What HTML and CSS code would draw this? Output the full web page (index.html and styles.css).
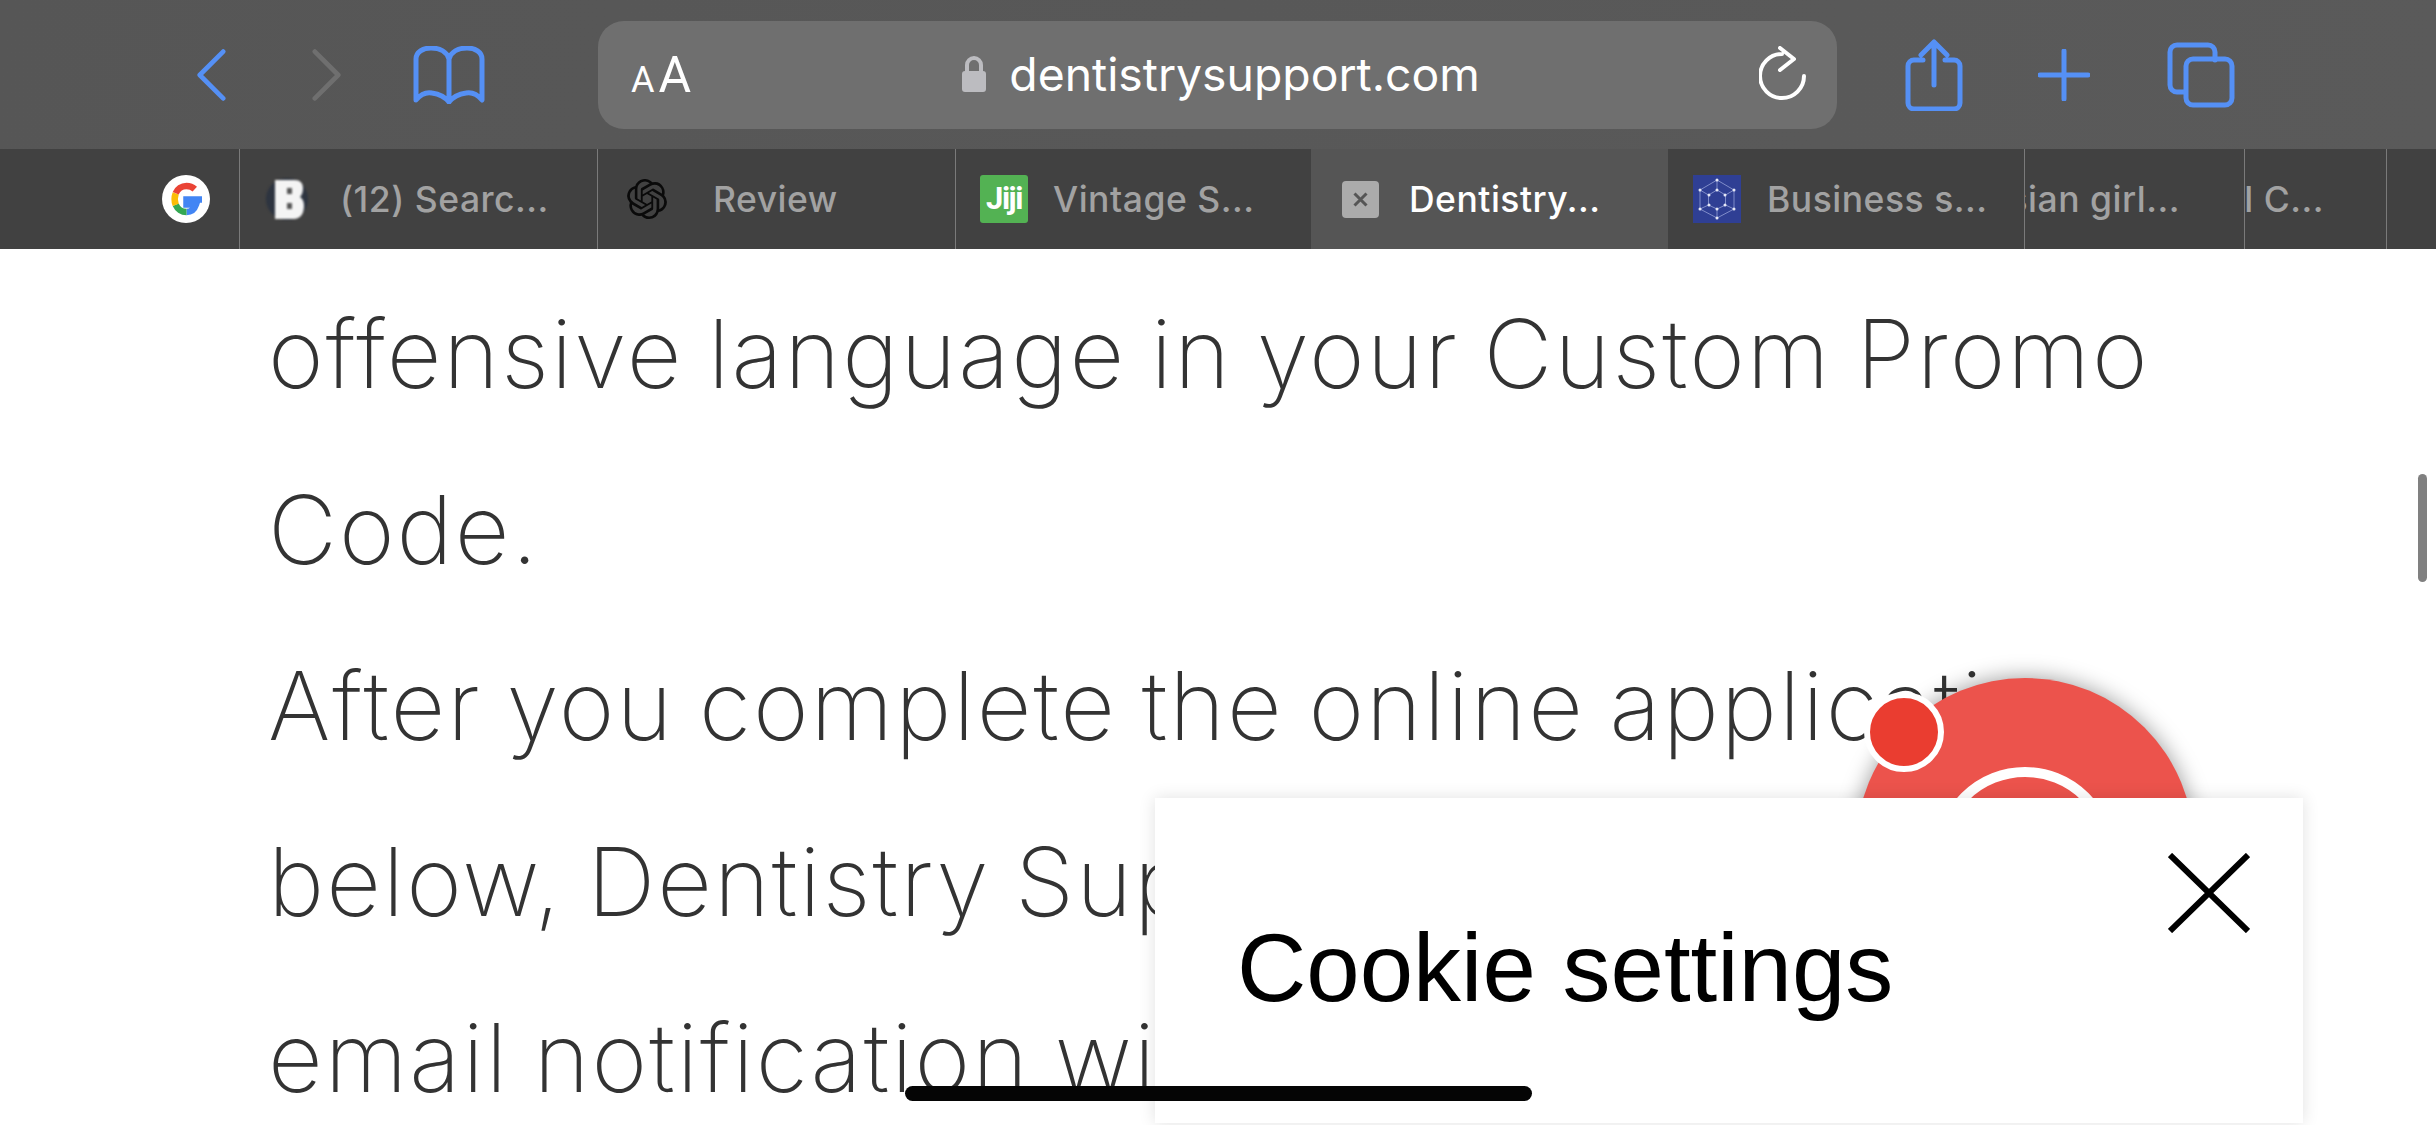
FILE: index.html
```html
<!DOCTYPE html>
<html lang="en">
<head>
    <meta charset="UTF-8">
    <meta name="viewport" content="width=device-width, initial-scale=1.0">
    <title>dentistrysupport.com</title>
    <link rel="stylesheet" href="styles.css">
</head>
<body>
    <header class="toolbar">
        <svg class="icon back" viewBox="0 0 32 56"><path d="M29 3 4 28l25 25" /></svg>
        <svg class="icon forward" viewBox="0 0 32 56"><path d="M3 3l25 25L3 53" /></svg>
        <svg class="icon book" viewBox="0 0 72 58">
            <path d="M36 13C34 6 27 2 18 2 10 2 3 6 3 13v41c5-6 11-8 16-7 7 1 13 4 17 9 4-5 10-8 17-9 5-1 11 1 16 7V13c0-7-7-11-15-11-9 0-16 4-18 11zM36 13v43" />
        </svg>

        <div class="address">
            <div class="text-size"><span class="small-a">A</span><span class="big-a">A</span></div>
            <div class="site">
                <svg class="lock" viewBox="0 0 26 36">
                    <path class="lock-body" d="M4 15h18a3 3 0 0 1 3 3v15a3 3 0 0 1-3 3H4a3 3 0 0 1-3-3V18a3 3 0 0 1 3-3z" />
                    <path class="lock-bow" d="M6 15V9a7 7 0 0 1 14 0v6" />
                </svg>
                <span class="url">dentistrysupport.com</span>
            </div>
            <svg class="reload" viewBox="0 0 48 54">
                <path d="M45 30a22 22 0 1 1-22-22M21 2l14 11-14 11" />
            </svg>
        </div>

        <svg class="icon share" viewBox="0 0 58 72">
            <path d="M18 21H9a6 6 0 0 0-6 6v37a6 6 0 0 0 6 6h40a6 6 0 0 0 6-6V27a6 6 0 0 0-6-6h-9M29 46V3M16 16 29 3l13 13" />
        </svg>
        <svg class="icon plus" viewBox="0 0 52 52"><path d="M26 2v48M2 26h48" /></svg>
        <svg class="icon pages" viewBox="0 0 68 66">
            <path d="M17 50H10a7 7 0 0 1-7-7V10a7 7 0 0 1 7-7h31a7 7 0 0 1 7 7v8" />
            <rect x="19" y="17" width="46" height="46" rx="7" />
        </svg>
    </header>

    <nav class="tabs">
        <div class="tab tab-first">
            <svg class="favicon google" viewBox="0 0 48 48">
                <circle cx="24" cy="24" r="24" fill="#fff" />
                <path d="M40 24.500H24.500v5H34c-1.500 4.500-5 7.500-9.500 7.500" fill="none" stroke="#4285f4" stroke-width="6.500" />
                <path d="M24.500 37c-4.800 0-9-2.900-10.800-7.200" fill="none" stroke="#34a853" stroke-width="6.500" />
                <path d="M13.700 29.800c-1.400-3.700-1.400-7.800 0-11.500" fill="none" stroke="#fbbc05" stroke-width="6.500" />
                <path d="M13.700 18.300c1.800-4.300 6-7.300 10.800-7.300 3.300 0 6 1.100 8.300 3.200" fill="none" stroke="#ea4335" stroke-width="6.500" />
            </svg>
        </div>
        <div class="tab">
            <svg class="favicon blurred" viewBox="0 0 44 48">
                <circle cx="21" cy="24" r="21" fill="#2d3440" />
                <path d="M9 5h20c5 0 8 3 8 8 0 4-1 7-3 9 3 2 4 5 4 9 0 8-4 13-10 13H9z" fill="#f4f4f4" />
                <rect x="21" y="13" width="5" height="6" fill="#555" />
                <rect x="21" y="28" width="5" height="6" fill="#555" />
            </svg>
            <span class="tab-title">(12) Searc...</span>
        </div>
        <div class="tab">
            <svg class="favicon knot" viewBox="0 0 24 24">
                <path d="M22.2819 9.8211a5.9847 5.9847 0 0 0-.5157-4.9108 6.0462 6.0462 0 0 0-6.5098-2.9A6.0651 6.0651 0 0 0 4.9807 4.1818a5.9847 5.9847 0 0 0-3.9977 2.9 6.0462 6.0462 0 0 0 .7427 7.0966 5.98 5.98 0 0 0 .511 4.9107 6.051 6.051 0 0 0 6.5146 2.9001A5.9847 5.9847 0 0 0 13.2599 24a6.0557 6.0557 0 0 0 5.7718-4.2058 5.9894 5.9894 0 0 0 3.9977-2.9001 6.0557 6.0557 0 0 0-.7475-7.0729zm-9.022 12.6081a4.4755 4.4755 0 0 1-2.8764-1.0408l.1419-.0804 4.7783-2.7582a.7948.7948 0 0 0 .3927-.6813v-6.7369l2.02 1.1686a.071.071 0 0 1 .038.052v5.5826a4.504 4.504 0 0 1-4.4945 4.4944zm-9.6607-4.1254a4.4708 4.4708 0 0 1-.5346-3.0137l.142.0852 4.783 2.7582a.7712.7712 0 0 0 .7806 0l5.8428-3.3685v2.3324a.0804.0804 0 0 1-.0332.0615L9.74 19.9502a4.4992 4.4992 0 0 1-6.1408-1.6464zM2.3408 7.8956a4.485 4.485 0 0 1 2.3655-1.9728V11.6a.7664.7664 0 0 0 .3879.6765l5.8144 3.3543-2.0201 1.1685a.0757.0757 0 0 1-.071 0l-4.8303-2.7865A4.504 4.504 0 0 1 2.3408 7.872zm16.5963 3.8558L13.1038 8.364 15.1192 7.2a.0757.0757 0 0 1 .071 0l4.8303 2.7913a4.4944 4.4944 0 0 1-.6765 8.1042v-5.6772a.79.79 0 0 0-.407-.667zm2.0107-3.0231l-.142-.0852-4.7735-2.7818a.7759.7759 0 0 0-.7854 0L9.409 9.2297V6.8974a.0662.0662 0 0 1 .0284-.0615l4.8303-2.7866a4.4992 4.4992 0 0 1 6.6802 4.66zM8.3065 12.863l-2.02-1.1638a.0804.0804 0 0 1-.038-.0567V6.0742a4.4992 4.4992 0 0 1 7.3757-3.4537l-.142.0805L8.704 5.459a.7948.7948 0 0 0-.3927.6813zm1.0976-2.3654l2.602-1.4998 2.6069 1.4998v2.9994l-2.5974 1.4997-2.6067-1.4997Z" />
            </svg>
            <span class="tab-title tab-title-wide">Review</span>
        </div>
        <div class="tab tab-jiji">
            <div class="favicon jiji">Jiji</div>
            <span class="tab-title">Vintage S...</span>
        </div>
        <div class="tab tab-active">
            <div class="favicon closer">
                <svg viewBox="0 0 20 20"><path d="M2 2l16 16M18 2 2 18" /></svg>
            </div>
            <span class="tab-title">Dentistry...</span>
        </div>
        <div class="tab tab-after-active">
            <svg class="favicon" viewBox="0 0 48 48">
                <rect width="48" height="48" fill="#2f3f94" />
                <g fill="none" stroke="#7f8cc9" stroke-width="1">
                    <path d="M24 5 41 15v19L24 43 7 34V15zM24 15l8.500 5v10L24 34l-8.500-4V20zM24 5v10M41 15l-8.500 5M41 34l-8.500-4M24 43v-9M7 34l8.500-4M7 15l8.500 5" />
                </g>
                <g fill="#e6e8f5">
                    <circle cx="24" cy="5" r="1.500" /><circle cx="41" cy="15" r="1.500" /><circle cx="41" cy="34" r="1.500" />
                    <circle cx="24" cy="43" r="1.500" /><circle cx="7" cy="34" r="1.500" /><circle cx="7" cy="15" r="1.500" />
                    <circle cx="24" cy="15" r="1.500" /><circle cx="32" cy="20" r="1.500" /><circle cx="32" cy="30" r="1.500" />
                    <circle cx="24" cy="34" r="1.500" /><circle cx="16" cy="30" r="1.500" /><circle cx="16" cy="20" r="1.500" />
                </g>
            </svg>
            <span class="tab-title">Business s...</span>
        </div>
        <div class="tab tab-stack tab-stack-a"><span class="tab-title">Asian girl...</span></div>
        <div class="tab tab-stack tab-stack-b"><span class="tab-title">al C...</span></div>
    </nav>

    <main class="page">
        <p>offensive language in your Custom Promo<br>Code.</p>
        <p>After you complete the online application<br>below, Dentistry Support will send you an<br>email notification with your code</p>

        <div class="scroll-thumb"></div>

        <div class="fab">
            <div class="fab-ring"></div>
        </div>
        <div class="fab-dot"></div>

        <section class="cookie-panel">
            <svg class="cookie-close" viewBox="0 0 82 80"><path d="M2 2l78 76M80 2 2 78" /></svg>
            <h2>Cookie settings</h2>
        </section>

        <div class="home-bar"></div>
    </main>
</body>
</html>
```

FILE: styles.css
```css
* {
    box-sizing: border-box;
}

html, body {
    height: 100%;
}

body {
    margin: 0;
    overflow: hidden;
    background-color: #fff;
    font-family: Inter, "Liberation Sans", sans-serif;
    display: flex;
    flex-direction: column;
}

/* toolbar */
.toolbar {
    height: 149px;
    flex: none;
    display: flex;
    align-items: center;
    padding-left: 196px;
    background: linear-gradient(100deg, #565656, #5a5a5a);
}

.icon {
    flex: none;
    fill: none;
    stroke: #5590f5;
    stroke-width: 5;
    stroke-linecap: round;
    stroke-linejoin: round;
}

.back {
    width: 30px;
    height: 56px;
}

.forward {
    width: 30px;
    height: 56px;
    margin-left: 86px;
    stroke: #6f6f6f;
}

.book {
    width: 72px;
    height: 58px;
    margin-left: 71px;
}

.address {
    width: 1239px;
    height: 108px;
    margin-left: 113px;
    padding: 0 30px 0 33px;
    border-radius: 26px;
    background-color: #6f6f6f;
    display: flex;
    align-items: center;
    color: #fff;
}

.text-size {
    font-family: Roboto, sans-serif;
    font-weight: 400;
    display: flex;
    align-items: baseline;
    gap: 4px;
    line-height: 1;
}

.small-a {
    font-size: 36px;
}

.big-a {
    font-size: 50px;
}

.site {
    flex: 1;
    display: flex;
    align-items: center;
    justify-content: center;
    gap: 22px;
    margin-left: -9px;
}

.lock {
    width: 26px;
    height: 36px;
}

.lock-body {
    fill: #bcbcc0;
}

.lock-bow {
    fill: none;
    stroke: #bcbcc0;
    stroke-width: 4;
}

.url {
    font-size: 46.300px;
    line-height: 1;
}

.reload {
    flex: none;
    width: 48px;
    height: 54px;
    margin-bottom: 4px;
    fill: none;
    stroke: #fff;
    stroke-width: 4;
    stroke-linecap: round;
    stroke-linejoin: round;
}

.share {
    width: 58px;
    height: 72px;
    margin-left: 68px;
}

.plus {
    width: 52px;
    height: 52px;
    margin-left: 75px;
}

.pages {
    width: 68px;
    height: 66px;
    margin-left: 77px;
}

/* tab strip */
.tabs {
    height: 100px;
    flex: none;
    display: flex;
    background-color: #414141;
    color: #a2a2a2;
    font-weight: 500;
    font-size: 35.500px;
    letter-spacing: 0.500px;
}

.tab {
    flex: none;
    width: 358px;
    display: flex;
    align-items: center;
    padding-left: 26px;
    border-right: 1px solid #7a7a7a;
    white-space: nowrap;
    overflow: hidden;
}

.tab-first {
    width: 240px;
    padding-left: 162px;
}

.favicon {
    flex: none;
    width: 44px;
    height: 48px;
}

.google {
    width: 48px;
}

.blurred {
    filter: blur(0.8px);
}

.tab-title {
    margin-left: 30px;
}

.tab-title-wide {
    margin-left: 46px;
}

.knot {
    width: 40px;
    height: 40px;
    margin-left: 3px;
    fill: #0a0a0a;
}

.tab-jiji {
    width: 355px;
    padding-left: 24px;
    border-right: none;
}

.jiji {
    width: 48px;
    margin-right: -5px;
    border-radius: 3px;
    background-color: #53b253;
    color: #fff;
    font-family: Roboto, sans-serif;
    font-size: 31px;
    font-weight: 700;
    line-height: 48px;
    text-align: center;
    letter-spacing: -1.500px;
}

.closer {
    width: 37px;
    height: 37px;
    margin-left: 5px;
    border-radius: 4px;
    background-color: #ababab;
    display: flex;
    align-items: center;
    justify-content: center;
}

.closer svg {
    width: 15px;
    height: 15px;
    fill: none;
    stroke: #555;
    stroke-width: 4;
}

.tab-active {
    width: 357px;
    background-color: #555;
    color: #fff;
    border-right: none;
}

.tab-after-active {
    width: 357px;
    padding-left: 25px;
}

.tab-after-active .favicon {
    width: 48px;
    height: 48px;
}

.tab-after-active .tab-title {
    margin-left: 26px;
}

.tab-stack {
    justify-content: flex-end;
    padding-left: 0;
}

.tab-stack .tab-title {
    margin: 0;
}

.tab-stack-a {
    width: 220px;
    padding-right: 64px;
}

.tab-stack-b {
    width: 142px;
    padding-right: 62px;
}

/* page content */
.page {
    flex: 1;
    position: relative;
    overflow: hidden;
    padding: 17px 0 0 268px;
    color: #333;
    font-size: 95px;
    font-weight: 200;
    letter-spacing: 2px;
    word-spacing: -4px;
    line-height: 176px;
    white-space: nowrap;
}

.page p {
    margin: 0;
}

.scroll-thumb {
    position: absolute;
    top: 225px;
    left: 2418px;
    width: 9px;
    height: 108px;
    border-radius: 5px;
    background-color: #808080;
}

.fab {
    position: absolute;
    top: 429px;
    left: 1856px;
    width: 338px;
    height: 338px;
    border-radius: 50%;
    background-color: #ec534c;
    box-shadow: 0 0 22px rgba(0, 0, 0, 0.4);
}

.fab-ring {
    position: absolute;
    top: 89px;
    left: 79px;
    width: 180px;
    height: 180px;
    border: 10px solid #fff;
    border-radius: 50%;
}

.fab-dot {
    position: absolute;
    top: 443px;
    left: 1864px;
    width: 80px;
    height: 80px;
    border: 6px solid #fff;
    border-radius: 50%;
    background-color: #ea3d30;
}

.cookie-panel {
    position: absolute;
    top: 549px;
    left: 1155px;
    width: 1148px;
    height: 325px;
    background-color: #fff;
    box-shadow: 0 0 16px rgba(0, 0, 0, 0.12);
    color: #000;
    font-family: "Liberation Sans", Arial, sans-serif;
    font-weight: 400;
    letter-spacing: 0;
    word-spacing: 0;
    line-height: 1;
}

.cookie-panel h2 {
    margin: 0;
    padding: 122px 0 0 82px;
    font-size: 96px;
    font-weight: 400;
}

.cookie-close {
    position: absolute;
    top: 55px;
    right: 53px;
    width: 82px;
    height: 80px;
    fill: none;
    stroke: #000;
    stroke-width: 6;
}

.home-bar {
    position: absolute;
    top: 837px;
    left: 905px;
    width: 627px;
    height: 15px;
    border-radius: 8px;
    background-color: #050505;
}
```
